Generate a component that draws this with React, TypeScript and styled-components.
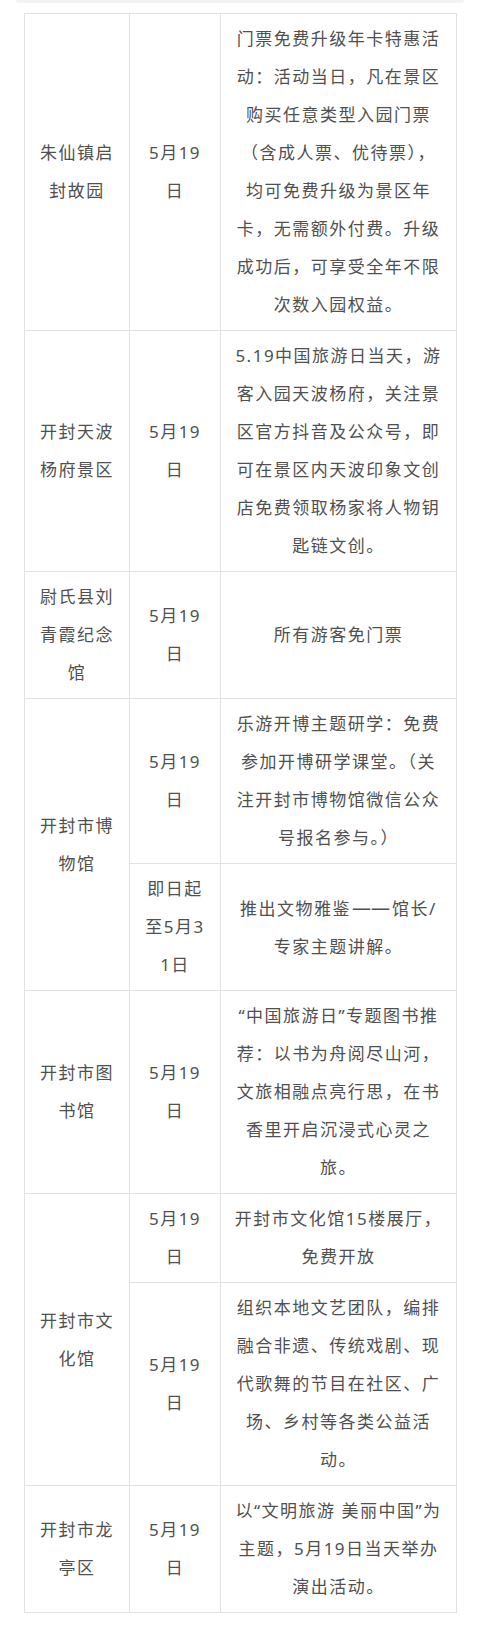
import React from "react";
import styled, { createGlobalStyle } from "styled-components";

const GlobalStyle = createGlobalStyle`
  html, body {
    margin: 0;
    padding: 0;
    background: #ffffff;
  }
  body {
    font-family: "Noto Sans", "Noto Sans CJK SC", sans-serif;
  }
`;

const Page = styled.div`
  width: 480px;
  padding-bottom: 14px;
`;

const TopEdge = styled.div`
  height: 3px;
  margin: 0 16px;
  background: #f3f3f3;
  border-radius: 0 0 3px 3px;
`;

const Wrap = styled.div`
  padding: 10px 24px 0 24px;
`;

const Table = styled.table`
  width: 432px;
  border-collapse: collapse;
  table-layout: fixed;
`;

const Cell = styled.td`
  border: 1px solid #e2e2e2;
  padding: 6px 12px;
  color: #505050;
  font-size: 17px;
  line-height: 38px;
  letter-spacing: 1.5px;
  text-align: center;
  vertical-align: middle;
  white-space: pre-line;
`;

// the double dash reads as one unbroken rule in the original
const Dash = styled.span`
  letter-spacing: 0;
  margin: 0 2px 0 1px;
  font-family: "Noto Sans", sans-serif;
  font-size: 19px;
`;

type Activity = { date: string; text: React.ReactNode };
type Venue = { name: string; items: Activity[] };

// line breaks follow the original article's table
const venues: Venue[] = [
  {
    name: "朱仙镇启\n封故园",
    items: [
      {
        date: "5月19\n日",
        text:
          "门票免费升级年卡特惠活\n动：活动当日，凡在景区\n购买任意类型入园门票\n（含成人票、优待票），\n均可免费升级为景区年\n卡，无需额外付费。升级\n成功后，可享受全年不限\n次数入园权益。",
      },
    ],
  },
  {
    name: "开封天波\n杨府景区",
    items: [
      {
        date: "5月19\n日",
        text:
          "5.19中国旅游日当天，游\n客入园天波杨府，关注景\n区官方抖音及公众号，即\n可在景区内天波印象文创\n店免费领取杨家将人物钥\n匙链文创。",
      },
    ],
  },
  {
    name: "尉氏县刘\n青霞纪念\n馆",
    items: [{ date: "5月19\n日", text: "所有游客免门票" }],
  },
  {
    name: "开封市博\n物馆",
    items: [
      {
        date: "5月19\n日",
        text:
          "乐游开博主题研学：免费\n参加开博研学课堂。（关\n注开封市博物馆微信公众\n号报名参与。）",
      },
      {
        date: "即日起\n至5月3\n1日",
        text: (
          <>
            推出文物雅鉴<Dash>——</Dash>馆长/{"\n"}专家主题讲解。
          </>
        ),
      },
    ],
  },
  {
    name: "开封市图\n书馆",
    items: [
      {
        date: "5月19\n日",
        text:
          "“中国旅游日”专题图书推\n荐：以书为舟阅尽山河，\n文旅相融点亮行思，在书\n香里开启沉浸式心灵之\n旅。",
      },
    ],
  },
  {
    name: "开封市文\n化馆",
    items: [
      { date: "5月19\n日", text: "开封市文化馆15楼展厅，\n免费开放" },
      {
        date: "5月19\n日",
        text:
          "组织本地文艺团队，编排\n融合非遗、传统戏剧、现\n代歌舞的节目在社区、广\n场、乡村等各类公益活\n动。",
      },
    ],
  },
  {
    name: "开封市龙\n亭区",
    items: [
      {
        date: "5月19\n日",
        text: "以“文明旅游 美丽中国”为\n主题，5月19日当天举办\n演出活动。",
      },
    ],
  },
];

export default function App() {
  return (
    <>
      <GlobalStyle />
      <Page>
        <TopEdge />
        <Wrap>
          <Table>
            <colgroup>
              <col style={{ width: "105px" }} />
              <col style={{ width: "91px" }} />
              <col style={{ width: "236px" }} />
            </colgroup>
            <tbody>
              {venues.map((v) =>
                v.items.map((item, i) => (
                  <tr key={v.name + i}>
                    {i === 0 && <Cell rowSpan={v.items.length}>{v.name}</Cell>}
                    <Cell>{item.date}</Cell>
                    <Cell>{item.text}</Cell>
                  </tr>
                ))
              )}
            </tbody>
          </Table>
        </Wrap>
      </Page>
    </>
  );
}
